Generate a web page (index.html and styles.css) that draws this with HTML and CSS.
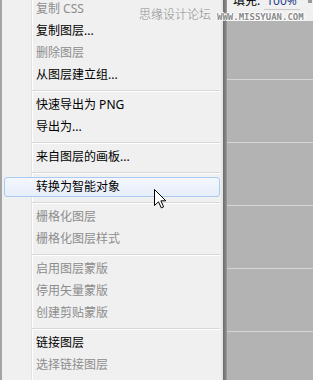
FILE: index.html
```html
<!DOCTYPE html>
<html lang="zh-CN">
<head>
<meta charset="utf-8">
<title>图层菜单</title>
<link rel="stylesheet" href="styles.css">
</head>
<body>
<div class="screen">
  <div class="menu">
    <div class="menu-list">
      <div class="item disabled">复制 CSS</div>
      <div class="item">复制图层...</div>
      <div class="item disabled">删除图层</div>
      <div class="item">从图层建立组...</div>
      <div class="sep"></div>
      <div class="item">快速导出为 PNG</div>
      <div class="item">导出为...</div>
      <div class="sep"></div>
      <div class="item">来自图层的画板...</div>
      <div class="sep"></div>
      <div class="item active"><span class="hl">转换为智能对象</span></div>
      <div class="sep"></div>
      <div class="item disabled">栅格化图层</div>
      <div class="item disabled">栅格化图层样式</div>
      <div class="sep"></div>
      <div class="item disabled">启用图层蒙版</div>
      <div class="item disabled">停用矢量蒙版</div>
      <div class="item disabled">创建剪贴蒙版</div>
      <div class="sep"></div>
      <div class="item">链接图层</div>
      <div class="item disabled">选择链接图层</div>
    </div>
  </div>
  <div class="shadow"></div>
  <div class="canvas">
    <div class="options">
      <span class="label">填充:</span>
      <span class="value">100%</span>
      <span class="arrow"></span>
    </div>
    <div class="layers">
      <div class="layer"></div>
      <div class="layer"></div>
      <div class="layer"></div>
      <div class="layer"></div>
      <div class="layer"></div>
    </div>
  </div>
  <div class="wm-cn">思缘设计论坛</div>
  <div class="wm-en">WWW.MISSYUAN.COM</div>
  <svg class="cursor" width="13" height="20" viewBox="0 0 13 20">
    <polygon points="0.5,0.5 0.5,16.5 4.5,12.8 7.3,18.9 9.6,17.9 6.9,11.8 11.8,11.8" fill="#ffffff" stroke="#000000" stroke-width="1" stroke-linejoin="miter"/>
  </svg>
</div>
</body>
</html>
```

FILE: styles.css
```css
html, body {
  margin: 0;
  padding: 0;
}

body {
  width: 313px;
  height: 380px;
  overflow: hidden;
  background: #b3b3b3;
  font-family: "Noto Sans", "Noto Sans CJK SC", sans-serif;
}

.screen {
  position: relative;
  display: flex;
  width: 313px;
  height: 380px;
  overflow: hidden;
}

.menu {
  width: 219px;
  flex: none;
  border-left: 2px solid #a3a3a3;
  border-right: 2px solid #e6e6e6;
  background:
    linear-gradient(to right,
      #f0f0f0 0, #f0f0f0 29px,
      #e2e3e3 29px, #e2e3e3 30px,
      #ffffff 30px, #ffffff 31px,
      #f0f0f0 31px, #f0f0f0 100%);
}

.menu-list {
  margin-top: -2px;
  display: flex;
  flex-direction: column;
}

.item {
  height: 22px;
  line-height: 22px;
  padding-left: 34px;
  font-size: 12px;
  color: #000000;
  white-space: nowrap;
}

.item.disabled {
  color: #8d8d8d;
}

.item.active {
  padding-left: 0;
  display: flex;
}

.hl {
  flex: 1;
  margin: 1px 1px 1px 2px;
  height: 18px;
  line-height: 18px;
  padding-left: 31px;
  border: 1px solid #a9caf1;
  border-radius: 3px;
  background: linear-gradient(to bottom, #f4f7fc, #e6eefa);
}

.sep {
  height: 0;
  margin: 4px 1px 2px 30px;
  border-top: 1px solid #d7d7d7;
  border-bottom: 1px solid #ffffff;
}

.shadow {
  width: 4px;
  flex: none;
  background: linear-gradient(to right, #6a6a6a, #7c7c7c 50%, #9c9c9c);
}

.canvas {
  flex: 1;
  display: flex;
  flex-direction: column;
  background: #b3b3b3;
}

.options {
  height: 21px;
  flex: none;
  background: #f0f0f0;
  display: flex;
  align-items: flex-start;
  font-size: 12px;
  line-height: 12px;
  position: relative;
}

.label {
  margin-top: -5px;
  margin-left: 6px;
  color: #000000;
}

.value {
  margin-top: -5px;
  margin-left: 4px;
  padding: 0 3px 2px 2px;
  color: #2a3f8f;
  border-bottom: 1px solid #c9c9c9;
}

.arrow {
  margin-left: 8px;
  width: 4px;
  height: 3px;
  background: #9a9a9a;
}

.layers {
  flex: 1;
  padding-top: 58px;
  display: flex;
  flex-direction: column;
}

.layer {
  height: 62px;
  flex: none;
  border-top: 1px solid #d6d6d6;
}

.wm-cn {
  position: absolute;
  left: 139px;
  top: 7px;
  font-family: "Noto Sans CJK SC", sans-serif;
  font-size: 12px;
  font-weight: 300;
  line-height: 14px;
  color: #8a8a8a;
  letter-spacing: 0;
}

.wm-en {
  position: absolute;
  left: 217px;
  top: 12px;
  font-family: "DejaVu Sans Mono", monospace;
  font-weight: bold;
  font-size: 9px;
  line-height: 10px;
  color: #8a8a8a;
  text-shadow: 1px 0 0 #ffffff, -1px 0 0 #ffffff, 0 1px 0 #ffffff, 0 -1px 0 #ffffff;
}

.cursor {
  position: absolute;
  left: 154px;
  top: 189px;
}
```
